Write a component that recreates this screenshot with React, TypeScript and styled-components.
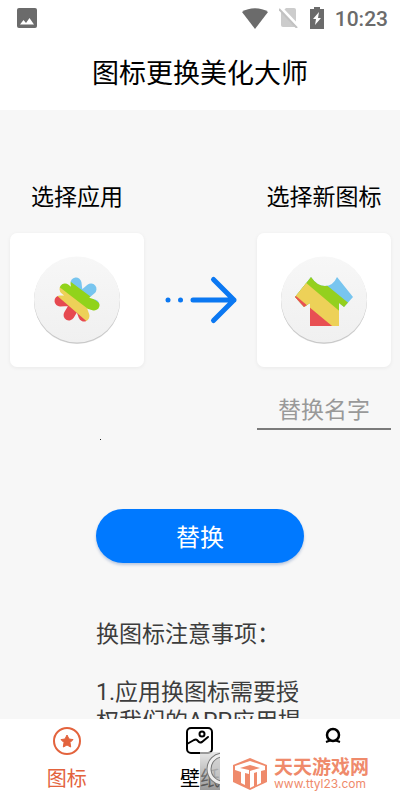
import React from "react";
import styled, { createGlobalStyle } from "styled-components";

const GlobalStyle = createGlobalStyle`
  *, *::before, *::after { box-sizing: border-box; }
  body {
    margin: 0;
    background: #f7f7f7;
    color: #000;
    font-family: Roboto, "Noto Sans CJK SC", sans-serif;
  }
  button, input { font-family: inherit; }
  svg { display: block; }
`;

const Page = styled.div`
  display: flex;
  flex-direction: column;
  height: 100vh;
`;

const Header = styled.header`
  flex: none;
  background: #fff;
`;

const StatusBar = styled.div`
  display: flex;
  align-items: center;
  justify-content: space-between;
  height: 36px;
  padding: 0 12px 0 17px;
  color: #6b6b6b;
`;

const StatusGroup = styled.div`
  display: flex;
  align-items: center;
  gap: 11px;
`;

const Clock = styled.time`
  padding-top: 2px;
  font-size: 21px;
  line-height: 24px;
  font-weight: 500;
`;

const Title = styled.h1`
  margin: 0;
  padding-top: 2px;
  font-size: 27px;
  line-height: 72px;
  font-weight: 400;
  text-align: center;
`;

const Main = styled.main`
  flex: 1;
  min-height: 0;
  overflow: hidden;
  padding-top: 71px;
`;

const Chooser = styled.section`
  display: flex;
  justify-content: space-between;
  padding: 0 9px 0 10px;
`;

const Column = styled.div`
  display: flex;
  flex-direction: column;
  align-items: center;
  width: 134px;
`;

const Label = styled.h2`
  margin: 0 0 18px;
  font-size: 23px;
  line-height: 34px;
  font-weight: 400;
  white-space: nowrap;
`;

const Card = styled.button`
  display: flex;
  align-items: center;
  justify-content: center;
  width: 100%;
  height: 134px;
  padding: 0;
  border: 0;
  border-radius: 7px;
  background: #fff;
  box-shadow: 0 1px 4px rgba(0, 0, 0, 0.06);
`;

const ArrowSlot = styled.div`
  padding-top: 94px;
`;

const NameInput = styled.input`
  width: 100%;
  height: 39px;
  margin-top: 24px;
  padding: 2px 0 0;
  border: 0;
  border-bottom: 2px solid #7b7b7b;
  border-radius: 0;
  outline: 0;
  background: transparent;
  color: #222;
  font-size: 23px;
  text-align: center;
  &::placeholder { color: #999; opacity: 1; }
`;

const Speck = styled.div`
  width: 1px;
  height: 1px;
  margin: 9px 0 0 100px;
  background: #222;
`;

const Body = styled.section`
  width: 52%;
  margin: 69px auto 0;
`;

const ReplaceButton = styled.button`
  display: block;
  width: 100%;
  height: 54px;
  padding: 0 0 2px;
  border: 0;
  border-radius: 27px;
  background: #0079ff;
  color: #fff;
  font-size: 24px;
  box-shadow: 0 2px 3px rgba(0, 60, 150, 0.25);
`;

const Notes = styled.div`
  margin-top: 57px;
  color: #3d3d3d;
  font-size: 23px;
  line-height: 29px;
`;

const Note = styled.p`
  margin: 0 0 29px;
`;

const TabBar = styled.nav`
  position: relative;
  flex: none;
  display: grid;
  grid-template-columns: repeat(3, 1fr);
  height: 81px;
  background: #fff;
`;

const Tab = styled.button<{ $active?: boolean }>`
  display: flex;
  flex-direction: column;
  align-items: center;
  gap: 8px;
  padding: 7px 0 0;
  border: 0;
  background: none;
  color: ${(p) => (p.$active ? "#e3633d" : "#000")};
  font-size: 20px;
  line-height: 30px;
`;

const Ghost = styled.div`
  position: absolute;
  left: 50%;
  top: 33px;
`;

const Watermark = styled.div`
  position: absolute;
  right: 31px;
  top: 39px;
  display: flex;
  align-items: center;
  gap: 6px;
  color: #ef8a6b;
`;

const WatermarkText = styled.div`
  display: flex;
  flex-direction: column;
`;

const SiteName = styled.strong`
  font-size: 19px;
  line-height: 20px;
  font-weight: 700;
`;

const SiteLink = styled.a`
  color: inherit;
  font-family: Inter, sans-serif;
  font-size: 12px;
  line-height: 12px;
  text-decoration: none;
`;

function PictureStatusIcon() {
  return (
    <svg width="20" height="20" viewBox="0 0 20 20" aria-hidden="true">
      <rect width="20" height="20" rx="2" fill="currentColor" />
      <path d="M3 16.500 6.500 12l2.500 3 3.500-5L17 16.500Z" fill="#fff" />
    </svg>
  );
}

function WifiIcon() {
  return (
    <svg width="26" height="21" viewBox="0 0 26 21" aria-hidden="true">
      <path d="M0 4C7-1 19-1 26 4L13 21Z" fill="currentColor" />
    </svg>
  );
}

function NoSimIcon() {
  return (
    <svg width="20" height="20" viewBox="0 0 20 20" aria-hidden="true">
      <path d="M7 0H15a2 2 0 0 1 2 2V19H4a2 2 0 0 1-2-2V5Z" fill="#ccc" />
      <path d="M2 0 20 19" stroke="#fff" strokeWidth="3" />
      <path d="M0 1 18 20" stroke="#c2c2c2" strokeWidth="2" />
    </svg>
  );
}

function BatteryIcon() {
  return (
    <svg width="14" height="22" viewBox="0 0 14 22" aria-hidden="true">
      <path d="M4 0h6v2h4v20H0V2h4Z" fill="currentColor" />
      <path d="M9 5 3 12h3l-1 6 6-7H8Z" fill="#fff" />
    </svg>
  );
}

function Disc({ id }: { id: string }) {
  return (
    <>
      <defs>
        <linearGradient id={id} x1="0" y1="0" x2="0" y2="1">
          <stop offset="0" stopColor="#f7f7f7" />
          <stop offset="1" stopColor="#f0f0f0" />
        </linearGradient>
      </defs>
      <circle cx="45" cy="46" r="43" fill="#e2e2e2" />
      <circle cx="45" cy="45.500" r="43" fill="#c6c6c6" />
      <circle cx="45" cy="44.500" r="43" fill={`url(#${id})`} />
    </>
  );
}

function FlowerIcon() {
  return (
    <svg width="90" height="90" viewBox="0 0 90 90" aria-hidden="true">
      <Disc id="disc-flower" />
      <defs>
        <mask id="flower" maskUnits="userSpaceOnUse" x="0" y="0" width="90" height="90">
          <path
            d="M46 45 44 28M46 45 59 34M46 45 62 50M46 45 52 61M46 45 37 60M46 45 28 46M46 45 33 34"
            fill="none"
            stroke="#fff"
            strokeWidth="11"
            strokeLinecap="round"
          />
        </mask>
      </defs>
      <g mask="url(#flower)">
        <rect width="90" height="90" fill="#78c5ef" />
        <path d="M0-2 90 65V90H0Z" fill="#91d31b" />
        <path d="M0 11 90 80V90H0Z" fill="#edd158" />
        <path d="M0 19 82 90H0Z" fill="#e64950" />
      </g>
    </svg>
  );
}

function ShirtIcon() {
  return (
    <svg width="90" height="90" viewBox="0 0 90 90" aria-hidden="true">
      <Disc id="disc-shirt" />
      <defs>
        <clipPath id="shirt">
          <path d="M32 22Q38 31 46 31 54 31 58 22L74 42 65 52 60 48V71H31V48L25 52 16 42Z" />
        </clipPath>
      </defs>
      <g clipPath="url(#shirt)">
        <rect width="90" height="90" fill="#78c5ef" />
        <path d="M0-9 90 65V90H0Z" fill="#94d01e" />
        <path d="M0 5 90 81V90H0Z" fill="#edd158" />
        <path d="M0 27 76 90H0Z" fill="#e85053" />
      </g>
    </svg>
  );
}

function ArrowIcon() {
  return (
    <svg width="74" height="50" viewBox="0 0 74 50" fill="none" aria-hidden="true">
      <circle cx="4" cy="25" r="2.500" fill="#0b78f2" />
      <circle cx="16.500" cy="25" r="2.500" fill="#0b78f2" />
      <path d="M29 25H70M49.500 4.500 70 25 49.500 45.500" stroke="#0b78f2" strokeWidth="5" strokeLinecap="round" strokeLinejoin="round" />
    </svg>
  );
}

function StarTabIcon() {
  return (
    <svg width="30" height="30" viewBox="0 0 30 30" aria-hidden="true">
      <circle cx="15" cy="15" r="13" fill="none" stroke="currentColor" strokeWidth="2" />
      <path d="m15 9 2 4 4 .6-3 3 .7 4.400-3.700-2-3.700 2 .7-4.400-3-3 4-.6Z" fill="currentColor" stroke="currentColor" strokeLinejoin="round" />
    </svg>
  );
}

function WallpaperTabIcon() {
  return (
    <svg width="30" height="30" viewBox="0 0 30 30" fill="none" stroke="currentColor" strokeWidth="2" strokeLinecap="round" strokeLinejoin="round" aria-hidden="true">
      <rect x="2" y="2" width="25" height="25" rx="4" />
      <circle cx="17" cy="8" r="2.500" />
      <path d="m2 18 7-4q2-1 3 0l2 2q1 1 3 0l6-5" />
    </svg>
  );
}

function ProfileTabIcon() {
  return (
    <svg width="30" height="30" viewBox="0 0 30 30" fill="none" stroke="currentColor" aria-hidden="true">
      <circle cx="15" cy="9" r="6" strokeWidth="2.500" />
      <path d="M8 16 12 14.500M18 14.500 22 16" strokeWidth="2" />
    </svg>
  );
}

function GhostIcon() {
  return (
    <svg width="20" height="38" viewBox="0 0 20 38" aria-hidden="true">
      <defs>
        <linearGradient id="ghost" x1="0" y1="0" x2="0" y2="1">
          <stop offset="0" stopColor="#ddd" />
          <stop offset="1" stopColor="#707070" />
        </linearGradient>
      </defs>
      <rect width="20" height="38" fill="url(#ghost)" fillOpacity="0.7" />
      <circle cx="23" cy="17" r="14" fill="#ccc" fillOpacity="0.6" stroke="#777" strokeWidth="5" />
      <circle cx="23" cy="17" r="14" fill="none" stroke="#eee" strokeWidth="3" />
    </svg>
  );
}

function SiteLogo() {
  return (
    <svg width="36" height="32" viewBox="0 0 36 32" aria-hidden="true">
      <path d="M18 0 35 7V24L18 32 1 24V7Z" fill="currentColor" />
      <path d="M3 8 18 3 33 8V12L29 13V25L25 27V14L22 15V28L18 30V13L21 12 28 10 18 7 8 10 17 12V16L13 15V27L9 25V14L3 12Z" fill="#fff" />
    </svg>
  );
}

export default function App() {
  return (
    <>
      <GlobalStyle />
      <Page>
        <Header>
          <StatusBar>
            <PictureStatusIcon />
            <StatusGroup>
              <WifiIcon />
              <NoSimIcon />
              <BatteryIcon />
              <Clock>10:23</Clock>
            </StatusGroup>
          </StatusBar>
          <Title>图标更换美化大师</Title>
        </Header>
        <Main>
          <Chooser>
            <Column>
              <Label id="app-label">选择应用</Label>
              <Card type="button" aria-labelledby="app-label">
                <FlowerIcon />
              </Card>
            </Column>
            <ArrowSlot>
              <ArrowIcon />
            </ArrowSlot>
            <Column>
              <Label id="icon-label">选择新图标</Label>
              <Card type="button" aria-labelledby="icon-label">
                <ShirtIcon />
              </Card>
              <NameInput type="text" placeholder="替换名字" aria-label="替换名字" />
            </Column>
          </Chooser>
          <Speck />
          <Body>
            <ReplaceButton type="button">替换</ReplaceButton>
            <Notes>
              <Note>换图标注意事项：</Note>
              <Note>1.应用换图标需要授权我们的APP应用提</Note>
            </Notes>
          </Body>
        </Main>
        <TabBar>
          <Tab type="button" $active aria-current="page">
            <StarTabIcon />
            图标
          </Tab>
          <Tab type="button">
            <WallpaperTabIcon />
            壁纸
          </Tab>
          <Tab type="button" aria-label="我的">
            <ProfileTabIcon />
          </Tab>
          <Ghost>
            <GhostIcon />
          </Ghost>
          <Watermark>
            <SiteLogo />
            <WatermarkText>
              <SiteName>天天游戏网</SiteName>
              <SiteLink href="#">www.ttyl23.com</SiteLink>
            </WatermarkText>
          </Watermark>
        </TabBar>
      </Page>
    </>
  );
}
